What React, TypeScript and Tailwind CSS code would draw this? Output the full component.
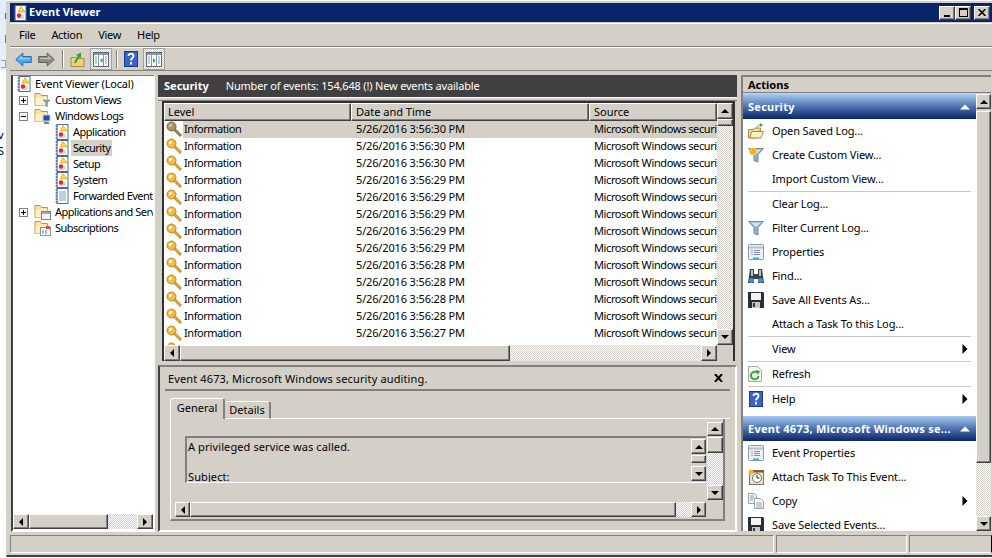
import type { ReactNode } from "react";

const raised =
  "border border-t-white border-l-white border-r-[#404040] border-b-[#404040] shadow-[inset_-1px_-1px_0_#808080] bg-[#d4d0c8]";
const hatch = "bg-[repeating-conic-gradient(#d4d0c8_0_25%,#ffffff_0_50%)] bg-[length:2px_2px]";

const events = [
  "3:56:30", "3:56:30", "3:56:30", "3:56:29", "3:56:29", "3:56:29", "3:56:29",
  "3:56:29", "3:56:28", "3:56:28", "3:56:28", "3:56:28", "3:56:27",
];

function Tri({ dir, color = "#000000" }: { dir: "up" | "down" | "left" | "right"; color?: string }) {
  const pts = {
    up: "4,1 0,5 8,5",
    down: "0,1 8,1 4,5",
    left: "5,0 5,8 1,4",
    right: "1,0 1,8 5,4",
  }[dir];
  const w = dir === "up" || dir === "down" ? 8 : 6;
  const h = dir === "up" || dir === "down" ? 6 : 8;
  return (
    <svg width={w} height={h} viewBox={`0 0 ${w} ${h}`}>
      <polygon points={pts} fill={color} />
    </svg>
  );
}

function SBtn({ dir, className }: { dir: "up" | "down" | "left" | "right"; className: string }) {
  return (
    <div className={`${raised} flex shrink-0 items-center justify-center ${className}`}>
      <Tri dir={dir} />
    </div>
  );
}

function LogIcon({ plain = false }: { plain?: boolean }) {
  return (
    <svg width="14" height="16" viewBox="0 0 14 16" className="shrink-0">
      <rect x="2" y="0.5" width="11" height="15" fill="#ffffff" stroke="#4a6a94" />
      <path d="M0.5 2h2M0.5 5h2M0.5 8h2M0.5 11h2M0.5 14h2" stroke="#2c4a78" />
      {plain ? (
        <path d="M4 4h7M4 6h7M4 8h7M4 10h7M4 12h7" stroke="#7f9cc0" />
      ) : (
        <>
          <path d="M4 11h7M4 13h7" stroke="#a9b9d0" />
          <polygon points="8,1.5 12,7 5,7" fill="#ffd83c" stroke="#c89a10" strokeWidth="0.6" />
          <circle cx="6" cy="10.5" r="2.2" fill="#d8283a" />
        </>
      )}
    </svg>
  );
}

function FolderIcon({ children }: { children?: ReactNode }) {
  return (
    <svg width="17" height="16" viewBox="0 0 17 16" className="shrink-0">
      <path d="M1 1.500h5l1.500 2h6v10h-12.500z" fill="#fbe4a6" stroke="#b8944c" />
      <path d="M1.500 5.500h12v8h-12z" fill="#fff1c6" />
      {children}
    </svg>
  );
}

function Key({ dim = false }: { dim?: boolean }) {
  const dark = dim ? "#7d6a3c" : "#c08a1c";
  const fill = dim ? "#a8946a" : "#f2b94a";
  return (
    <svg width="17" height="17" viewBox="0 0 17 17" className="shrink-0">
      <path d="M7 7l8 8" stroke={dark} strokeWidth="2.600" />
      <path d="M7.500 7.500l7 7" stroke={fill} strokeWidth="1" />
      <circle cx="5.500" cy="5.500" r="4.500" fill={fill} stroke={dark} />
      <ellipse cx="4.500" cy="4.500" rx="2" ry="1.400" fill={dim ? "#c9c5b8" : "#fdf2d4"} transform="rotate(-45 4.500 4.500)" />
    </svg>
  );
}

function PropsIcon() {
  return (
    <svg width="16" height="16" viewBox="0 0 16 16">
      <rect x="0.500" y="0.500" width="15" height="15" rx="1" fill="#eef0f4" stroke="#8f98a4" />
      <path d="M1 3.500h14" stroke="#b8c0cc" strokeWidth="2" />
      <path d="M6 6.500h6M6 8.500h6M6 10.500h6" stroke="#7f8fa8" />
      <path d="M3.500 6.500h1M3.500 8.500h1M3.500 10.500h1" stroke="#4b6fa8" />
      <path d="M5 14.500h6" stroke="#25b5e8" strokeWidth="2" />
    </svg>
  );
}

function SaveIcon() {
  return (
    <svg width="16" height="16" viewBox="0 0 16 16">
      <path d="M0 0h15l1 1v15h-16z" fill="#2a2d33" />
      <rect x="3" y="1" width="10" height="7" fill="#f4f4f4" />
      <rect x="4" y="10" width="8" height="6" fill="#c4c8cc" />
      <rect x="5" y="11" width="2" height="4" fill="#34383e" />
    </svg>
  );
}

function FilterIcon({ star = false }: { star?: boolean }) {
  return (
    <svg width="16" height="16" viewBox="0 0 16 16">
      <path d="M0.500 1.500h15l-5.500 6v7.500l-4-1.500v-6z" fill="#8fb2cc" stroke="#6f8a9c" />
      <path d="M3 2.500h10l-4 4h-2z" fill="#d2e4f0" />
      {star && <circle cx="5" cy="4.500" r="3.500" fill="#f8b020" stroke="#f8d060" />}
    </svg>
  );
}

function HelpIcon({ s = 16 }: { s?: number }) {
  return (
    <svg width={s} height={s} viewBox="0 0 16 16">
      <rect x="1.500" y="0.500" width="13" height="15" fill="#3a62c8" stroke="#1c3a8c" />
      <path d="M5.500 5c0-3 5-3 5 0 0 2-2.500 2-2.500 4.500" fill="none" stroke="#ffffff" strokeWidth="1.800" />
      <rect x="7" y="11" width="2" height="2.500" fill="#ffffff" />
    </svg>
  );
}

function Binoculars() {
  return (
    <svg width="16" height="16" viewBox="0 0 16 16">
      <path d="M2 1h4v5h4v-5h4l2 14h-6v-4h-4v4h-6z" fill="#3a4048" />
      <rect x="3" y="2" width="2" height="6" fill="#b8c0c8" />
      <rect x="11" y="2" width="2" height="6" fill="#b8c0c8" />
      <circle cx="3.500" cy="12.500" r="2.500" fill="#3c8ce0" />
      <circle cx="12.500" cy="12.500" r="2.500" fill="#3c8ce0" />
    </svg>
  );
}

function RefreshIcon() {
  return (
    <svg width="14" height="16" viewBox="0 0 14 16">
      <path d="M0.500 0.500h9l4 4v11h-13z" fill="#f6f6f2" stroke="#a8a8a0" />
      <path d="M10.500 10a3.800 3.800 0 1 1-1.200-3.300" fill="none" stroke="#3aa83a" strokeWidth="2" />
      <polygon points="8,4 12,5 10,9" fill="#3aa83a" />
    </svg>
  );
}

function TaskIcon() {
  return (
    <svg width="16" height="16" viewBox="0 0 16 16">
      <rect x="1.500" y="1.500" width="14" height="14" fill="#e8e2d4" stroke="#7c7468" />
      <rect x="1" y="1" width="15" height="2.500" fill="#8a5a38" />
      <circle cx="9" cy="9" r="4.500" fill="#fbfbf6" stroke="#7c7468" />
      <path d="M9 6v3h2.500" fill="none" stroke="#333333" />
      <circle cx="3" cy="3" r="2.500" fill="#f4b830" />
    </svg>
  );
}

function CopyIcon() {
  return (
    <svg width="16" height="16" viewBox="0 0 16 16">
      <path d="M0.500 0.500h6l2 2v8h-8z" fill="#f4f6f8" stroke="#9aa0a8" />
      <path d="M6.500 5.500h6l3 3v7h-9z" fill="#ffffff" stroke="#9aa0a8" />
      <path d="M8 10h6M8 12h6M8 14h6M2 3h4M2 5h4M2 7h3" stroke="#7f9fc8" />
    </svg>
  );
}

function OpenFolderIcon() {
  return (
    <svg width="16" height="16" viewBox="0 0 16 16">
      <path d="M0.500 6.500h5l1-1.500h6v3h-2l-2 7h-8z" fill="#f4dc9c" stroke="#ab8a44" />
      <path d="M3.500 8.500h12l-2.500 6.500h-11z" fill="#fcefc4" stroke="#ab8a44" />
      <path d="M9 4c1-2 2-2 4-2" fill="none" stroke="#40a040" />
      <polygon points="12,0 15,2 12,4" fill="#40a040" />
    </svg>
  );
}

function PaneIcon({ right = false }: { right?: boolean }) {
  return (
    <svg width="16" height="15" viewBox="0 0 16 15">
      <rect x="0.500" y="0.500" width="15" height="14" fill="#ffffff" stroke="#5c6670" />
      <rect x="1" y="1" width="14" height="2" fill="#8c98a4" />
      <path d="M5.500 3v11M10.500 3v11" stroke="#8c98a4" />
      <path d="M2 5h2M2 7h2M2 9h2M2 11h2M12 5h2M12 7h2M12 9h2M12 11h2" stroke="#6fa0d0" />
      <polygon points={right ? "7,6 7,11 9.500,8.500" : "9.500,6 9.500,11 7,8.500"} fill="#20a040" />
    </svg>
  );
}

function Arrow({ color, edge, flip = false }: { color: string; edge: string; flip?: boolean }) {
  return (
    <svg width="17" height="15" viewBox="0 0 17 15" className={flip ? "-scale-x-100" : ""}>
      <path d="M0.800 7.500l7-6.500v3.500h8.500v6h-8.500v3.500z" fill={color} stroke={edge} />
      <path d="M3 7.500l4-3.500v2h8v1z" fill="#ffffff" fillOpacity="0.45" />
    </svg>
  );
}

function Expander({ open }: { open?: boolean }) {
  return (
    <div className="flex h-[9px] w-[9px] shrink-0 items-center justify-center border border-[#808080] bg-white">
      <div className="relative h-px w-[5px] bg-black">
        {!open && <div className="absolute left-[2px] top-[-2px] h-[5px] w-px bg-black" />}
      </div>
    </div>
  );
}

function TreeRow({ indent, exp, icon, label, selected, root }: {
  indent: string; exp?: "open" | "closed"; icon: ReactNode; label: string; selected?: boolean; root?: boolean;
}) {
  return (
    <div className={`flex h-4 items-center whitespace-nowrap ${indent}`}>
      {exp && <div className="mr-[6px]"><Expander open={exp === "open"} /></div>}
      {icon}
      <span className={`ml-[2px] px-[2px] leading-4 ${root ? "tracking-[-0.2px]" : "tracking-[-0.5px]"} ${selected ? "bg-[#d4d0c8]" : ""}`}>{label}</span>
    </div>
  );
}

function Action({ icon, label, sub }: { icon?: ReactNode; label: string; sub?: boolean }) {
  return (
    <div className="flex h-6 shrink-0 items-center pl-[5px] pr-[8px]">
      <div className="flex w-[24px] shrink-0 items-center">{icon}</div>
      <span className="pb-[2px] tracking-[-0.12px]">{label}</span>
      {sub && <div className="ml-auto scale-125"><Tri dir="right" /></div>}
    </div>
  );
}

function ActionHead({ label }: { label: string }) {
  return (
    <div className="flex h-[25px] shrink-0 items-center whitespace-nowrap bg-gradient-to-b from-[#a6caf0] via-[#4f74b0] to-[#0a246a] pl-[5px] pr-[7px] font-bold tracking-[0.25px] text-white">
      <span>{label}</span>
      <div className="ml-auto scale-125"><Tri dir="up" color="#ffffff" /></div>
    </div>
  );
}

const Sep = () => <div className="mx-[5px] h-px shrink-0 bg-[#c8c8c8]" />;

export default function App() {
  return (
    <div className="flex h-[558px] w-[992px] overflow-hidden bg-white font-['Noto_Sans',sans-serif] text-[11px] leading-none text-black">
      {/* whatever is behind the window */}
      <div className="flex w-[6px] shrink-0 flex-col overflow-hidden text-[11px]">
        <div className="flex h-[70px] shrink-0 flex-col items-end bg-[#e4eefa]">
          <div className="mt-[13px] h-[6px] w-px bg-[#606870]" />
          <div className="mt-[16px] h-[8px] w-px bg-[#4878b8]" />
          <div className="mt-[17px] h-[8px] w-[5px] border border-l-0 border-[#a0a0a0]" />
        </div>
        <div className="mt-[59px] h-3 shrink-0 -translate-x-[2px]">v</div>
        <div className="mt-1 h-3 shrink-0 -translate-x-[2px]">S</div>
      </div>

      <div className="flex h-[557px] flex-1 flex-col border-l border-t border-b-2 border-t-white border-l-[#d4d0c8] border-b-[#404040] bg-[#d4d0c8] pl-[3px] pt-[2px]">
        {/* title bar */}
        <div className="flex h-[19px] shrink-0 items-center bg-[#0a246a] pl-[3px] pr-[2px] font-bold text-white">
          <LogIcon />
          <span className="ml-[2px] pb-[2px]">Event Viewer</span>
          <div className="ml-auto flex items-center">
            <div className={`${raised} flex h-[14px] w-4 items-end justify-center pb-[2px]`}><div className="h-[2px] w-[6px] bg-black" /></div>
            <div className={`${raised} flex h-[14px] w-4 items-center justify-center`}><div className="h-[9px] w-[9px] border border-t-2 border-black" /></div>
            <div className={`${raised} ml-[3px] flex h-[14px] w-4 items-center justify-center`}>
              <svg width="8" height="7" viewBox="0 0 8 7"><path d="M0.500 0l7 7M7.500 0l-7 7" stroke="#000000" strokeWidth="1.500" /></svg>
            </div>
          </div>
        </div>

        {/* menu bar */}
        <div className="mt-px flex h-[24px] shrink-0 items-center gap-[16px] border-y border-t-white border-b-[#808080] pb-[2px] pl-[9px] tracking-[-0.3px]">
          <span>File</span>
          <span>Action</span>
          <span>View</span>
          <span>Help</span>
        </div>

        {/* toolbar */}
        <div className="flex h-[24px] shrink-0 items-center border-t border-b border-t-white border-b-[#808080] pl-[5px]">
          <Arrow color="#4aa8e8" edge="#2a70b8" />
          <div className="ml-[6px]"><Arrow color="#8c8c88" edge="#606060" flip /></div>
          <div className="ml-[7px] h-[18px] w-[2px] border-l border-r border-l-[#808080] border-r-white" />
          <div className="ml-[6px]">
            <svg width="15" height="15" viewBox="0 0 15 15">
              <path d="M1 5.500h4l1 1h8v8h-13z" fill="#f0d078" stroke="#a88a40" />
              <path d="M5 11c1-3 3-5 4-7" fill="none" stroke="#30a030" strokeWidth="2" />
              <polygon points="6,3 11,0.500 11,6" fill="#30a030" />
            </svg>
          </div>
          <div className={`ml-[5px] flex h-[22px] w-[22px] items-center justify-center border border-[#a0a0a0] ${hatch}`}><PaneIcon /></div>
          <div className="ml-[4px] h-[18px] w-[2px] border-l border-r border-l-[#808080] border-r-white" />
          <div className="ml-[5px]"><HelpIcon /></div>
          <div className={`ml-[4px] flex h-[22px] w-[22px] items-center justify-center border border-[#a0a0a0] ${hatch}`}><PaneIcon right /></div>
        </div>

        {/* main area */}
        <div className="flex h-[461px] shrink-0 pl-px pt-[4px]">
          {/* tree */}
          <div className="flex h-[457px] w-[144px] shrink-0 flex-col border-x-2 border-b-2 border-t border-t-[#808080] border-l-[#404040] border-r-white border-b-white bg-white">
            <div className="flex-1 overflow-hidden">
              <TreeRow indent="pl-[4px]" icon={<LogIcon />} label="Event Viewer (Local)" root />
              <TreeRow indent="pl-[6px]" exp="closed" icon={<FolderIcon><path d="M9 8h7l-3 3v4l-1-1v-3z" fill="#8fa8b8" stroke="#607080" strokeWidth="0.500" /></FolderIcon>} label="Custom Views" />
              <TreeRow indent="pl-[6px]" exp="open" icon={<FolderIcon><rect x="9" y="7" width="7" height="6" fill="#1e50b8" stroke="#c8d0d8" /><path d="M10 15h5" stroke="#808080" strokeWidth="2" /></FolderIcon>} label="Windows Logs" />
              <TreeRow indent="pl-[42px]" icon={<LogIcon />} label="Application" />
              <TreeRow indent="pl-[42px]" icon={<LogIcon />} label="Security" selected />
              <TreeRow indent="pl-[42px]" icon={<LogIcon />} label="Setup" />
              <TreeRow indent="pl-[42px]" icon={<LogIcon />} label="System" />
              <TreeRow indent="pl-[42px]" icon={<LogIcon plain />} label="Forwarded Events" />
              <TreeRow indent="pl-[6px]" exp="closed" icon={<FolderIcon><rect x="7.500" y="7.500" width="9" height="8" fill="#f4f4f4" stroke="#808080" /><rect x="8" y="8" width="8" height="2" fill="#a8a8a8" /></FolderIcon>} label="Applications and Services Logs" />
              <TreeRow indent="pl-[21px]" icon={<FolderIcon><rect x="6.500" y="7.500" width="10" height="8" fill="#ffffff" stroke="#909090" /><rect x="12" y="6" width="4" height="3" fill="#e04848" /><path d="M8 11h2M11 11h2M8 13h2M11 13h2" stroke="#4878c8" /></FolderIcon>} label="Subscriptions" />
            </div>
            <div className="flex h-4 shrink-0">
              <SBtn dir="left" className="h-[15px] w-[16px]" />
              <div className={`${raised} h-[15px] w-[79px]`} />
              <div className={`h-[15px] flex-1 ${hatch}`} />
              <SBtn dir="right" className="h-[15px] w-[16px]" />
            </div>
          </div>

          {/* centre */}
          <div className="ml-[3px] flex w-[579px] shrink-0 flex-col">
            <div className="flex h-[22px] shrink-0 items-center bg-[#404040] pb-[2px] pl-[6px] text-white">
              <span className="font-bold">Security</span>
              <span className="ml-[17px] tracking-[-0.18px]">Number of events: 154,648 (!) New events available</span>
            </div>
            <div className="h-[4px] shrink-0 border-t border-b border-t-white border-b-[#808080]" />

            {/* event list */}
            <div className="ml-[4px] flex h-[260px] w-[573px] shrink-0 flex-col border-2 border-[#303030] bg-white">
              <div className="flex h-[242px] shrink-0">
                <div className="w-[553px] shrink-0 overflow-hidden">
                  <div className="flex h-[18px] items-center">
                    <div className={`${raised} flex h-[18px] w-[187px] shrink-0 items-center pb-[2px] pl-[3px]`}>Level</div>
                    <div className={`${raised} flex h-[18px] w-[238px] shrink-0 items-center pb-[2px] pl-[4px]`}>Date and Time</div>
                    <div className={`${raised} flex h-[18px] flex-1 items-center pb-[2px] pl-[4px]`}>Source</div>
                  </div>
                  {events.map((t, i) => (
                    <div key={i} className="flex h-[17px] items-center whitespace-nowrap pl-[2px]">
                      <Key dim={i === 0} />
                      <div className={`flex h-[17px] flex-1 items-center overflow-hidden pb-[2px] ${i === 0 ? "bg-[#d4d0c8]" : ""}`}>
                        <span className="w-[173px] shrink-0 pl-px tracking-[-0.45px]">Information</span>
                        <span className="w-[238px] shrink-0 tracking-[-0.15px]">{`5/26/2016 ${t} PM`}</span>
                        <span className="tracking-[-0.4px]">Microsoft Windows security auditing.</span>
                      </div>
                    </div>
                  ))}
                  <div className="flex h-[4px] overflow-hidden pl-[2px]"><Key /></div>
                </div>
                <div className="flex w-4 flex-1 flex-col">
                  <SBtn dir="up" className="h-4 w-full" />
                  <div className={`${raised} h-[7px] shrink-0`} />
                  <div className={`flex-1 ${hatch}`} />
                  <SBtn dir="down" className="h-4 w-full" />
                </div>
              </div>
              <div className="flex h-4 shrink-0 bg-[#d4d0c8]">
                <SBtn dir="left" className="h-4 w-4" />
                <div className={`${raised} h-4 w-[330px]`} />
                <div className={`h-4 w-[191px] ${hatch}`} />
                <SBtn dir="right" className="h-4 w-4" />
              </div>
            </div>

            {/* event detail */}
            <div className="mt-[4px] flex h-[167px] w-[579px] shrink-0 flex-col border-2 border-t-[#808080] border-l-[#404040] border-r-white border-b-white px-[5px]">
              <div className="flex h-[24px] shrink-0 items-center justify-between border-b-2 border-[#808080] pl-[3px] pr-[7px]">
                <span className="tracking-[0.13px]">Event 4673, Microsoft Windows security auditing.</span>
                <svg width="9" height="8" viewBox="0 0 9 8"><path d="M1 0l7 8M8 0l-7 8" stroke="#000000" strokeWidth="2" /></svg>
              </div>
              <div className="ml-[5px] mt-[7px] flex h-[21px] shrink-0 items-end">
                <div className="flex h-[21px] w-[55px] items-center justify-center rounded-t-[3px] border-l border-r-2 border-t border-l-white border-r-[#808080] border-t-white pb-[3px]">General</div>
                <div className="flex h-[18px] w-[46px] items-center justify-center rounded-t-[3px] border-r-2 border-t border-b border-t-white border-r-[#808080] border-b-white pb-px">Details</div>
                <div className="h-px flex-1 bg-white" />
              </div>
              <div className="ml-[5px] flex h-[102px] w-[555px] shrink-0 border-b-2 border-l border-r-2 border-b-[#808080] border-l-white border-r-[#808080]">
                <div className="flex w-[535px] shrink-0 flex-col">
                  <div className="ml-[14px] mt-[17px] flex h-[47px] w-[521px] shrink-0 border-l-2 border-t-2 border-b border-l-[#808080] border-t-[#808080] border-b-white">
                    <div className="flex-1 overflow-hidden whitespace-pre pl-px pt-px leading-[15px] tracking-[0.1px]">
                      {"A privileged service was called.\n\nSubject:"}
                    </div>
                    <div className="flex w-[15px] shrink-0 flex-col pt-px">
                      <SBtn dir="up" className="h-[15px] w-full" />
                      <div className={`${raised} mt-px h-[8px] shrink-0`} />
                      <div className="h-[3px] shrink-0" />
                      <SBtn dir="down" className="h-[15px] w-full" />
                    </div>
                  </div>
                  <div className="ml-[4px] mt-[19px] flex h-[15px] shrink-0">
                    <SBtn dir="left" className="h-[15px] w-[15px]" />
                    <div className={`${raised} h-[15px] w-[486px]`} />
                    <div className={`h-[15px] flex-1 ${hatch}`} />
                    <SBtn dir="right" className="h-[15px] w-[15px]" />
                  </div>
                </div>
                <div className="ml-px mt-[3px] flex h-[78px] w-[16px] shrink-0 flex-col">
                  <SBtn dir="up" className="h-[14px] w-full" />
                  <div className={`${raised} mt-px h-[16px] shrink-0`} />
                  <div className={`flex-1 ${hatch}`} />
                  <SBtn dir="down" className="h-[15px] w-full" />
                </div>
              </div>
            </div>
          </div>

          {/* actions */}
          <div className="ml-[4px] flex h-[456px] w-[250px] shrink-0 flex-col border-l-2 border-t-2 border-l-[#808080] border-t-[#808080]">
            <div className="flex h-[16px] shrink-0 items-center border-b border-[#808080] pl-[5px] font-bold">Actions</div>
            <div className="flex min-h-0 flex-1 pt-px">
              <div className="flex w-[233px] shrink-0 flex-col overflow-hidden bg-white">
                <ActionHead label="Security" />
                <Action icon={<OpenFolderIcon />} label="Open Saved Log..." />
                <Action icon={<FilterIcon star />} label="Create Custom View..." />
                <Action label="Import Custom View..." />
                <Sep />
                <Action label="Clear Log..." />
                <Action icon={<FilterIcon />} label="Filter Current Log..." />
                <Action icon={<PropsIcon />} label="Properties" />
                <Action icon={<Binoculars />} label="Find..." />
                <Action icon={<SaveIcon />} label="Save All Events As..." />
                <Action label="Attach a Task To this Log..." />
                <Sep />
                <Action label="View" sub />
                <Sep />
                <Action icon={<RefreshIcon />} label="Refresh" />
                <Sep />
                <Action icon={<HelpIcon />} label="Help" sub />
                <div className="h-[5px] shrink-0" />
                <ActionHead label="Event 4673, Microsoft Windows se..." />
                <Action icon={<PropsIcon />} label="Event Properties" />
                <Action icon={<TaskIcon />} label="Attach Task To This Event..." />
                <Action icon={<CopyIcon />} label="Copy" sub />
                <Action icon={<SaveIcon />} label="Save Selected Events..." />
              </div>
              <div className="flex w-[15px] shrink-0 flex-col">
                <SBtn dir="up" className="h-[15px] w-full" />
                <div className={`${raised} mt-[2px] h-[352px] shrink-0`} />
                <div className={`flex-1 ${hatch}`} />
                <SBtn dir="down" className="h-[15px] w-full" />
              </div>
            </div>
          </div>
        </div>

        {/* status bar */}
        <div className="mt-[3px] flex h-[18px] shrink-0 gap-[2px]">
          <div className="w-[764px] border border-t-[#808080] border-l-[#808080] border-r-white border-b-white" />
          <div className="w-[131px] border border-t-[#808080] border-l-[#808080] border-r-white border-b-white" />
          <div className="flex-1 border border-t-[#808080] border-l-[#808080] border-b-white" />
        </div>
      </div>
    </div>
  );
}
